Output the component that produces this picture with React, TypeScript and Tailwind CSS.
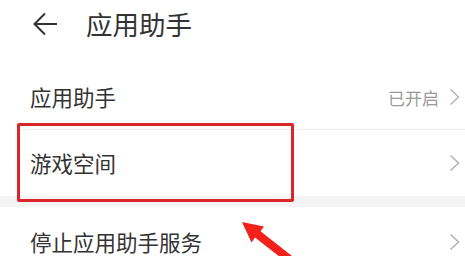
import React from "react";

const Chevron = ({ h = 18 }: { h?: number }) => (
  <svg width="11" height={h} viewBox="0 0 11 18" fill="none" className="shrink-0">
    <polyline points="1.5,1.5 9.5,9 1.5,16.5" stroke="#b5b5b5" strokeWidth="1.6" strokeLinejoin="miter" />
  </svg>
);

export default function App() {
  return (
    <div
      className="relative w-[465px] h-[256px] overflow-hidden bg-white text-[#333333]"
      style={{ fontFamily: '"Noto Sans CJK SC", "Noto Sans", sans-serif' }}
    >
      {/* Header */}
      <div className="flex h-[48px] items-center pl-[33px]">
        <svg width="25" height="24" viewBox="0 0 25 24" fill="none" className="shrink-0">
          <path d="M24 12H2 M12 1.5L1.5 12L12 22.5" stroke="#333" strokeWidth="2" />
        </svg>
        <span className="ml-[28px] text-[26.5px] leading-none">应用助手</span>
      </div>

      <div className="mt-[17px]">
        {/* Row 1 */}
        <div className="flex h-[64px] items-center pl-[30px] pr-[5px]">
          <span className="flex-1 text-[21.5px] leading-none">应用助手</span>
          <span className="text-[17px] leading-none text-[#9a9a9a] mr-[10px]">已开启</span>
          <Chevron />
        </div>
        <div className="ml-[17px] h-px bg-[#ececec]" />
        {/* Row 2 */}
        <div className="flex h-[66px] items-center pl-[30px] pr-[5px]">
          <span className="flex-1 text-[21.5px] leading-none">游戏空间</span>
          <Chevron />
        </div>
        <div className="h-[11px] bg-[#f4f4f4]" />
        {/* Row 3 */}
        <div className="flex h-[70px] items-center pl-[30px] pr-[5px]">
          <span className="flex-1 text-[21.5px] leading-none">停止应用助手服务</span>
          <Chevron />
        </div>
      </div>

      {/* Red highlight box */}
      <div className="absolute left-[17px] top-[123px] w-[277px] h-[79px] border-[3px] border-[#d8262b] rounded-[2px]" />

      {/* Red arrow */}
      <svg className="absolute left-0 top-0" width="465" height="256" viewBox="0 0 465 256">
        <polygon
          points="242,222 264,226.5 260.5,231.2 292,256 287,262.5 255,237.6 251.5,242.5"
          fill="#f2211c"
        />
      </svg>
    </div>
  );
}
